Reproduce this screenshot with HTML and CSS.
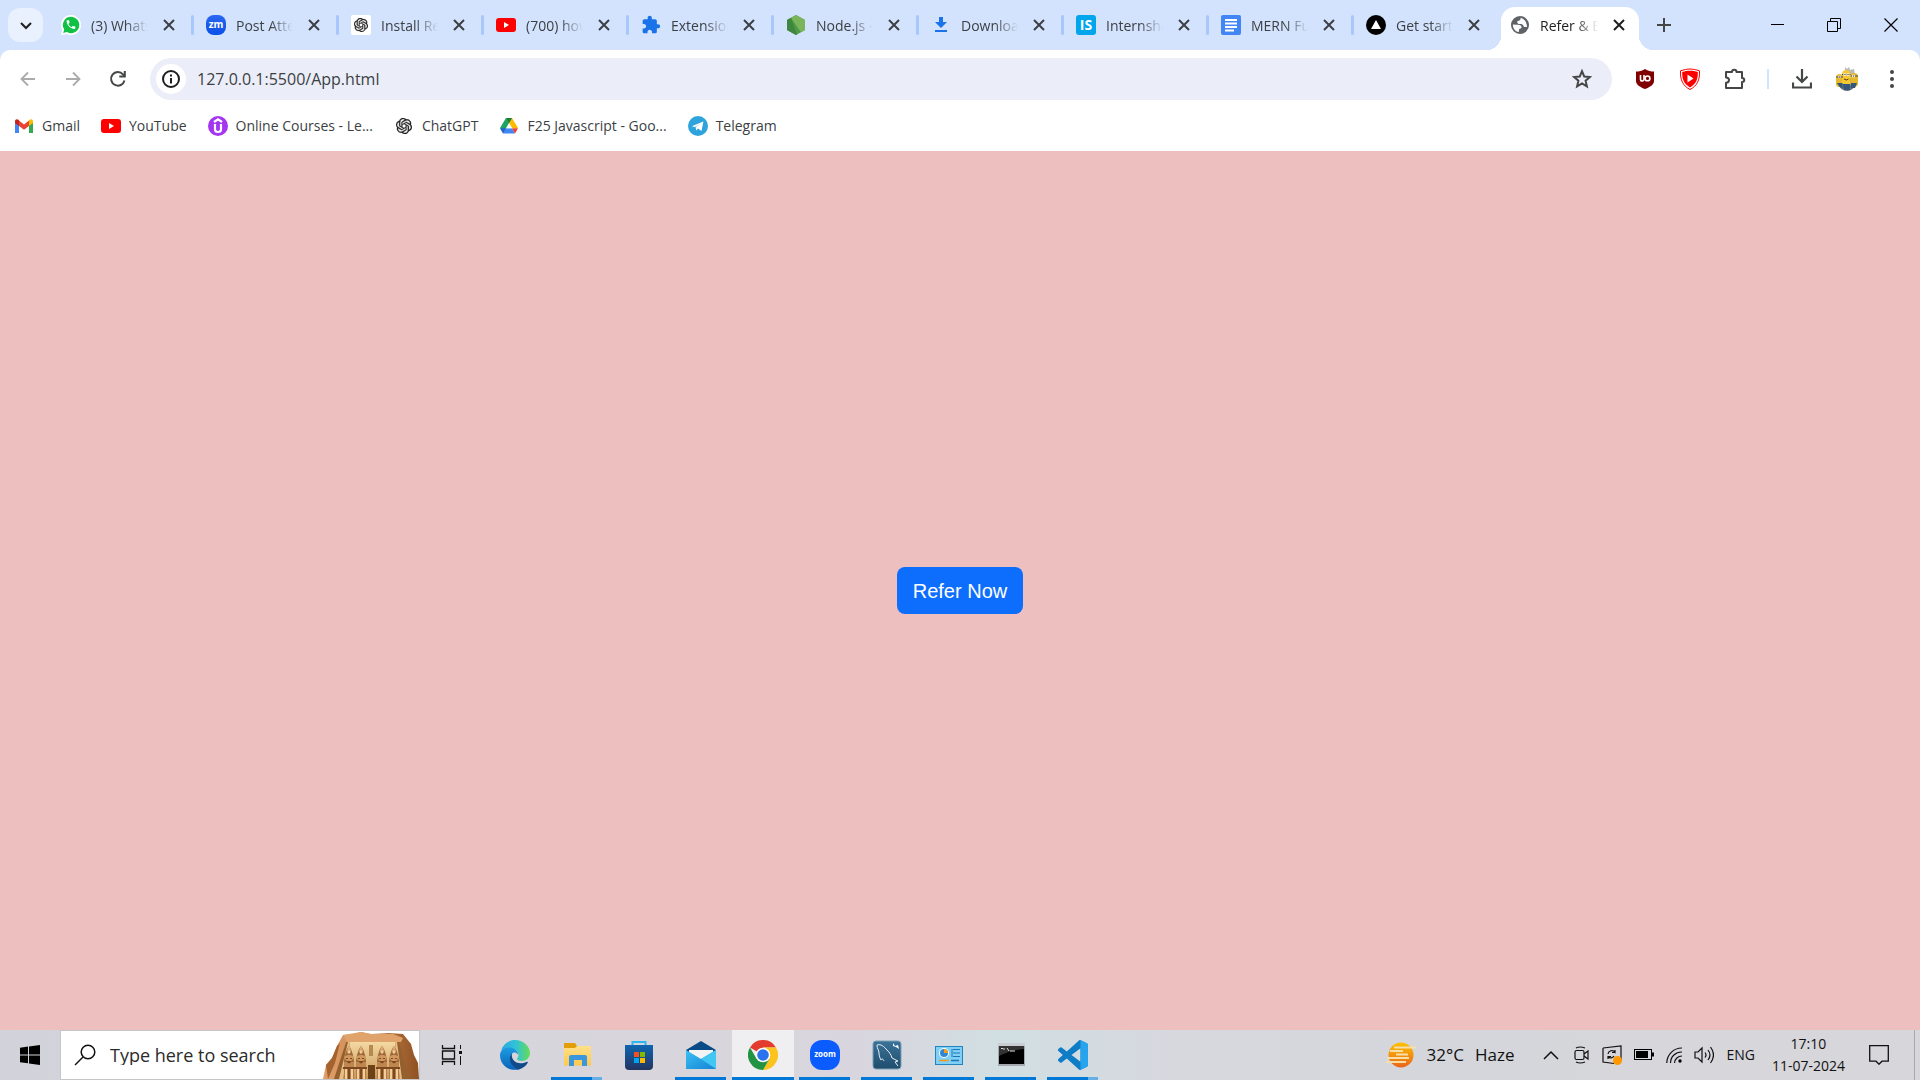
FILE: index.html
```html
<!DOCTYPE html>
<html lang="en">
<head>
<meta charset="utf-8">
<title>Refer &amp; Earn</title>
<link rel="stylesheet" href="styles.css">
</head>
<body>
<svg class="defs" aria-hidden="true">
  <defs>
    <symbol id="i-x" viewBox="0 0 14 14"><path d="M2 2l10 10M12 2L2 12" stroke="currentColor" stroke-width="2" fill="none"/></symbol>
    <symbol id="i-youtube" viewBox="0 0 20 20"><rect y="3" width="20" height="14" rx="3" fill="#f00"/><path d="M8 7l5 3-5 3z" fill="#fff"/></symbol>
    <symbol id="i-gpt" viewBox="0 0 24 24"><path fill="#222" stroke="#222" stroke-width=".5" d="M22.2819 9.8211a5.9847 5.9847 0 0 0-.5157-4.9108 6.0462 6.0462 0 0 0-6.5098-2.9A6.0651 6.0651 0 0 0 4.9807 4.1818a5.9847 5.9847 0 0 0-3.9977 2.9 6.0462 6.0462 0 0 0 .7427 7.0966 5.98 5.98 0 0 0 .511 4.9107 6.051 6.051 0 0 0 6.5146 2.9001A5.9847 5.9847 0 0 0 13.2599 24a6.0557 6.0557 0 0 0 5.7718-4.2058 5.9894 5.9894 0 0 0 3.9977-2.9001 6.0557 6.0557 0 0 0-.7475-7.0729zm-9.022 12.6081a4.4755 4.4755 0 0 1-2.8764-1.0408l.1419-.0804 4.7783-2.7582a.7948.7948 0 0 0 .3927-.6813v-6.7369l2.02 1.1686a.071.071 0 0 1 .038.052v5.5826a4.504 4.504 0 0 1-4.4945 4.4944zm-9.6607-4.1254a4.4708 4.4708 0 0 1-.5346-3.0137l.142.0852 4.783 2.7582a.7712.7712 0 0 0 .7806 0l5.8428-3.3685v2.3324a.0804.0804 0 0 1-.0332.0615L9.74 19.9502a4.4992 4.4992 0 0 1-6.1408-1.6464zM2.3408 7.8956a4.485 4.485 0 0 1 2.3655-1.9728V11.6a.7664.7664 0 0 0 .3879.6765l5.8144 3.3543-2.0201 1.1685a.0757.0757 0 0 1-.071 0l-4.8303-2.7865A4.504 4.504 0 0 1 2.3408 7.872zm16.5963 3.8558L13.1038 8.364 15.1192 7.2a.0757.0757 0 0 1 .071 0l4.8303 2.7913a4.4944 4.4944 0 0 1-.6765 8.1042v-5.6772a.79.79 0 0 0-.407-.667zm2.0107-3.0231l-.142-.0852-4.7735-2.7818a.7759.7759 0 0 0-.7854 0L9.409 9.2297V6.8974a.0662.0662 0 0 1 .0284-.0615l4.8303-2.7866a4.4992 4.4992 0 0 1 6.6802 4.66zM8.3065 12.863l-2.02-1.1638a.0804.0804 0 0 1-.038-.0567V6.0742a4.4992 4.4992 0 0 1 7.3757-3.4537l-.142.0805L8.704 5.459a.7948.7948 0 0 0-.3927.6813zm1.0976-2.3654l2.602-1.4998 2.6069 1.4998v2.9994l-2.5974 1.4997-2.6067-1.4997Z"/></symbol>
    <symbol id="pharaoh" viewBox="0 0 12 34"><path d="M6 0l2 3 2 6 1 6v6H1v-6l1-6 2-6z" fill="#a06a38"/><path d="M5 1h2l1 4-2 3-2-3z" fill="#d9a972"/><circle cx="6" cy="6" r="1.500" fill="#efcf9c"/><path d="M2 10l3-1h2l3 1v3L8 15H4l-2-2z" fill="#d0985f"/><path d="M3 12h2v1H3zM7 12h2v1H7zM4 15h4v2H4z" fill="#7d4a20"/><path d="M1 16h3l2 2 2-2h3v5H1z" fill="#c08650"/><path d="M0 21h12v2H0z" fill="#7b491f"/><path d="M1 23h4v11H1zM7 23h4v11H7z" fill="#b67c47"/><path d="M2 23h2v11H2zM8 23h2v11H8z" fill="#f0cf9d"/><path d="M5 23h2v11H5z" fill="#7b491f"/></symbol>
    <linearGradient id="g-zm" x1="0" y1="0" x2="0" y2="1"><stop offset="0" stop-color="#2a66f0"/><stop offset="1" stop-color="#0a4fe8"/></linearGradient>
    <linearGradient id="g-edge" x1="0" y1="0" x2="1" y2="0"><stop offset="0" stop-color="#2aa8e0"/><stop offset=".5" stop-color="#2fc2d8"/><stop offset="1" stop-color="#66dd55"/></linearGradient>
    <linearGradient id="g-edge2" x1="0" y1="0" x2="0" y2="1"><stop offset="0" stop-color="#1b9de2"/><stop offset="1" stop-color="#0b63b8"/></linearGradient>
    <linearGradient id="g-store" x1="0" y1="0" x2="0" y2="1"><stop offset="0" stop-color="#0f66b0"/><stop offset="1" stop-color="#22345f"/></linearGradient>
    <linearGradient id="g-folder" x1="0" y1="0" x2="0" y2="1"><stop offset="0" stop-color="#ffe08a"/><stop offset="1" stop-color="#fdc94b"/></linearGradient>
    <linearGradient id="g-mail" x1="0" y1="0" x2="1" y2="1"><stop offset="0" stop-color="#3cc0f2"/><stop offset="1" stop-color="#1583d6"/></linearGradient>
    <linearGradient id="g-sql" x1="0" y1="0" x2="0" y2="1"><stop offset="0" stop-color="#3b7399"/><stop offset="1" stop-color="#1f4d6d"/></linearGradient>
    <linearGradient id="g-sun" x1="0" y1="0" x2="0" y2="1"><stop offset="0" stop-color="#fcc200"/><stop offset="1" stop-color="#e9631b"/></linearGradient>
    <linearGradient id="g-rock" x1="0" y1="0" x2="1" y2="0"><stop offset="0" stop-color="#e0a069"/><stop offset=".5" stop-color="#c9824d"/><stop offset="1" stop-color="#8f5222"/></linearGradient>
    <linearGradient id="g-wall" x1="0" y1="0" x2="0" y2="1"><stop offset="0" stop-color="#f4d9a2"/><stop offset="1" stop-color="#c9965a"/></linearGradient>
  </defs>
</svg>

<header class="browser">
  <div class="tabstrip">
    <button class="tab-search" aria-label="Search tabs"><svg width="14" height="14" viewBox="0 0 14 14"><path d="M2 5l5 5 5-5" fill="none" stroke="#1f1f1f" stroke-width="2"/></svg></button>
    <nav class="tabs" aria-label="Tabs">
      <div class="tab">
        <svg class="fav" viewBox="0 0 20 20"><path d="M10 0a10 10 0 1 1-4.500 18.900L0 20l1.300-5A10 10 0 0 1 10 0z" fill="#fff"/><path d="M10 1.800A8.200 8.200 0 1 1 5.800 17l-3.600.9 1-3.400A8.200 8.200 0 0 1 10 1.800z" fill="#0fc144"/><path transform="translate(4.200 3.800) scale(.48)" fill="#fff" d="M6.620 10.790c1.440 2.830 3.760 5.140 6.590 6.590l2.200-2.200c.27-.27.67-.36 1.020-.24 1.120.37 2.330.57 3.570.57.55 0 1 .45 1 1V20c0 .55-.45 1-1 1-9.390 0-17-7.610-17-17 0-.55.45-1 1-1h3.500c.55 0 1 .45 1 1 0 1.250.2 2.450.57 3.570.11.35.03.74-.25 1.020z"/></svg>
        <button class="tab-title">(3) WhatsApp</button><button class="tab-close" aria-label="Close tab"><svg><use href="#i-x"/></svg></button>
      </div>
      <div class="tab">
        <svg class="fav" viewBox="0 0 20 20"><rect width="20" height="20" rx="8" fill="url(#g-zm)"/><text x="10" y="13" text-anchor="middle" class="logo logo-zm">zm</text></svg>
        <button class="tab-title">Post Attendee</button><button class="tab-close" aria-label="Close tab"><svg><use href="#i-x"/></svg></button>
      </div>
      <div class="tab">
        <svg class="fav" viewBox="0 0 20 20"><rect width="20" height="20" rx="2" fill="#fff"/><use href="#i-gpt" x="3" y="3" width="14" height="14"/></svg>
        <button class="tab-title">Install React</button><button class="tab-close" aria-label="Close tab"><svg><use href="#i-x"/></svg></button>
      </div>
      <div class="tab">
        <svg class="fav"><use href="#i-youtube"/></svg>
        <button class="tab-title">(700) how to</button><button class="tab-close" aria-label="Close tab"><svg><use href="#i-x"/></svg></button>
      </div>
      <div class="tab">
        <svg class="fav" viewBox="0 0 24 24"><path fill="#1a73e8" d="M20.500 11H19V7c0-1.100-.9-2-2-2h-4V3.500C13 2.120 11.880 1 10.500 1S8 2.120 8 3.500V5H4c-1.100 0-1.990.9-1.990 2v3.800H3.500c1.490 0 2.700 1.210 2.700 2.700s-1.210 2.700-2.700 2.700H2V20c0 1.100.9 2 2 2h3.800v-1.500c0-1.490 1.210-2.700 2.700-2.700 1.490 0 2.700 1.210 2.700 2.700V22H17c1.100 0 2-.9 2-2v-4h1.500c1.380 0 2.500-1.120 2.500-2.500S21.880 11 20.500 11z"/></svg>
        <button class="tab-title">Extensions</button><button class="tab-close" aria-label="Close tab"><svg><use href="#i-x"/></svg></button>
      </div>
      <div class="tab">
        <svg class="fav" viewBox="0 0 20 20"><path d="M10 0l9 5v10l-9 5-9-5V5z" fill="#4f9a44"/><path d="M10 0l9 5v10l-4 2.200L5 3z" fill="#7ab55c"/><path d="M1 5l4-2.200L11 19.500l-1 .5-9-5z" fill="#3f873f"/></svg>
        <button class="tab-title">Node.js - Run</button><button class="tab-close" aria-label="Close tab"><svg><use href="#i-x"/></svg></button>
      </div>
      <div class="tab">
        <svg class="fav" viewBox="0 0 20 20"><path d="M8 2h4v5h4l-6 6-6-6h4zM4 15h12v2H4z" fill="#1a73e8"/></svg>
        <button class="tab-title">Downloads</button><button class="tab-close" aria-label="Close tab"><svg><use href="#i-x"/></svg></button>
      </div>
      <div class="tab">
        <svg class="fav" viewBox="0 0 20 20"><rect width="20" height="20" rx="3" fill="#00a5ec"/><text x="10" y="15" text-anchor="middle" class="logo logo-is">IS</text></svg>
        <button class="tab-title">Internshala</button><button class="tab-close" aria-label="Close tab"><svg><use href="#i-x"/></svg></button>
      </div>
      <div class="tab">
        <svg class="fav" viewBox="0 0 20 20"><rect width="20" height="20" rx="2" fill="#4285f4"/><path d="M4 5h12M4 8.500h12M4 12h12M4 15.500h9" stroke="#fff" stroke-width="1.800"/></svg>
        <button class="tab-title">MERN Full Stack</button><button class="tab-close" aria-label="Close tab"><svg><use href="#i-x"/></svg></button>
      </div>
      <div class="tab">
        <svg class="fav" viewBox="0 0 20 20"><circle cx="10" cy="10" r="10" fill="#000"/><path d="M10 5l5 9H5z" fill="#fff"/></svg>
        <button class="tab-title">Get started</button><button class="tab-close" aria-label="Close tab"><svg><use href="#i-x"/></svg></button>
      </div>
      <div class="tab active">
        <svg class="fav" viewBox="0 0 20 20"><circle cx="10" cy="10" r="9" fill="#5f6368"/><path d="M10.500 2.800c.3 1.700-.3 2.700-2 2.900-1.200.2-1.500.8-1.200 1.700.4 1.300 1.400 1.700 3 1.600 1.700 0 2.600.5 3.200 1.900.6 1.300 1.700 1.500 3.600.9C16.500 7 14.500 3.700 10.500 2.800zM2.900 9.500c-.2 3.500 2.100 6.900 6 7.600v-1.900c.1-1 .6-1.300 1.700-1.600 1.300-.4 1.300-2 .3-2.900-.8-.8-2-1-4-1z" fill="#fff"/></svg>
        <button class="tab-title">Refer &amp; Earn</button><button class="tab-close" aria-label="Close tab"><svg><use href="#i-x"/></svg></button>
      </div>
    </nav>
    <button class="new-tab" aria-label="New tab"><svg width="14" height="14" viewBox="0 0 14 14"><path d="M7 0v14M0 7h14" stroke="#444746" stroke-width="2"/></svg></button>
    <div class="window-controls">
      <button aria-label="Minimize"><svg width="14" height="14" viewBox="0 0 14 14"><path d="M1 6.500h13" stroke="#000"/></svg></button>
      <button aria-label="Restore"><svg width="14" height="14" viewBox="0 0 14 14"><path d="M.5 3.500h10v10H.5zM3.500 3V.5h10v10H11" fill="none" stroke="#000"/></svg></button>
      <button aria-label="Close"><svg width="14" height="14" viewBox="0 0 14 14"><path d="M.5.5l13 13M13.500.5l-13 13" stroke="#000" stroke-width="1.200"/></svg></button>
    </div>
  </div>

  <div class="chrome-panel">
    <div class="toolbar">
      <div class="nav-buttons">
        <button aria-label="Back"><svg width="16" height="16" viewBox="0 0 16 16"><path d="M15 8H2M8 1.500L1.500 8 8 14.500" fill="none" stroke="#a9abad" stroke-width="1.800"/></svg></button>
        <button aria-label="Forward"><svg width="16" height="16" viewBox="0 0 16 16"><path d="M1 8h13M8 1.500L14.500 8 8 14.500" fill="none" stroke="#a9abad" stroke-width="1.800"/></svg></button>
        <button aria-label="Reload"><svg width="18" height="18" viewBox="0 0 18 18"><path d="M15.500 10.500A6.800 6.800 0 1 1 14 4.300l1.500 1.700" fill="none" stroke="#444746" stroke-width="2"/><path d="M16.800 1v6.500h-6.500V5.600h4.500V1z" fill="#444746"/></svg></button>
      </div>
      <form class="omnibox">
        <button type="button" class="site-info" aria-label="Site information"><svg width="18" height="18" viewBox="0 0 18 18"><circle cx="9" cy="9" r="8" fill="none" stroke="#1f1f1f" stroke-width="2"/><path d="M9 8v5.500M9 4.500v2" stroke="#1f1f1f" stroke-width="2"/></svg></button>
        <input type="text" aria-label="Address" value="127.0.0.1:5500/App.html">
        <button type="button" class="star" aria-label="Bookmark"><svg width="20" height="20" viewBox="0 0 20 20"><path d="M10 2.200l2.200 5.300 5.700.5-4.300 3.700 1.300 5.600-4.900-3-4.900 3 1.300-5.600L2.100 8l5.700-.5z" fill="none" stroke="#444746" stroke-width="2"/></svg></button>
      </form>
      <div class="extensions">
        <button aria-label="uBlock"><svg width="20" height="20" viewBox="0 0 20 20"><path d="M10 0c3 2 6 2.500 9 2.500V12c0 4-5 6.500-9 8-4-1.500-9-4-9-8V2.500C4 2.500 7 2 10 0z" fill="#800000"/><path d="M5.500 6v4.200a1.600 1.600 0 0 0 3.500 0V6" fill="none" stroke="#fff" stroke-width="1.600"/><circle cx="12.500" cy="9.400" r="2.400" fill="none" stroke="#fff" stroke-width="1.600"/></svg></button>
        <button aria-label="Video blocker"><svg width="22" height="22" viewBox="0 0 22 22"><path d="M11 1c3 0 6 .8 9.500 1.800C21 12 18 18 11 21.500 4 18 1 12 1.500 2.800 5 1.800 8 1 11 1z" fill="#fff" stroke="#f00"/><path d="M11 2.700c3 0 5 .5 7.800 1.400C19 11.500 17 16 11 19.500 5 16 3 11.500 3.200 4.100 6 3.200 8 2.700 11 2.700z" fill="#f00"/><path d="M8.500 6.500l6 4-6 4z" fill="#fff"/></svg></button>
        <button aria-label="Extensions"><svg width="22" height="22" viewBox="0 0 22 22"><path d="M3 4h5c0-3 4.500-3 4.500 0H18v6c3 0 3 4 0 4v6H2v-5.200c4 0 4-5.400 0-5.400V4z" fill="none" stroke="#444746" stroke-width="2" stroke-linejoin="round"/></svg></button>
        <span class="divider"></span>
        <button aria-label="Downloads"><svg width="20" height="20" viewBox="0 0 20 20"><path d="M10 0v13M4.500 7.500L10 13l5.500-5.500M1 13.500V18.500h18v-5" fill="none" stroke="#444746" stroke-width="2.200"/></svg></button>
        <button aria-label="Profile"><svg width="24" height="26" viewBox="0 0 24 26"><path d="M2 12a10 13 0 1 0 20 0z" fill="#6d7076"/><path d="M10 1l2 2 2-2 1 3 4-1 1 6H10z" fill="#b8bab5"/><rect x="1" y="8" width="7" height="13" rx="3.500" fill="#e6b92c"/><rect x="15.500" y="7" width="7.500" height="14" rx="3.700" fill="#e6b92c"/><rect x="7" y="4" width="8.500" height="18" rx="4.200" fill="#f4c832"/><path d="M2 17h5.500v5l-3-1zM7.500 18h7.500v6h-6zM16 17h6l-2 5h-4z" fill="#31577c"/><path d="M1 11h7M7 8.500h8.500M15.500 10H23" stroke="#484841"/><circle cx="4.500" cy="11" r="1.400" fill="#ddd"/><circle cx="9.800" cy="8.500" r="1.500" fill="#eee"/><circle cx="13" cy="8.500" r="1.500" fill="#eee"/><circle cx="18.500" cy="10" r="1.600" fill="#eee"/><path d="M4.500 10.500v1M10 8v1M13 8v1M18.500 9.500v1M9 13q2.500 2 4.500 0" stroke="#5a3510" fill="none"/></svg></button>
        <button aria-label="Menu"><svg width="20" height="20" viewBox="0 0 20 20" fill="#444746"><circle cx="10" cy="3" r="2"/><circle cx="10" cy="10" r="2"/><circle cx="10" cy="17" r="2"/></svg></button>
      </div>
    </div>

    <nav class="bookmarks" aria-label="Bookmarks">
      <a href="#"><svg class="fav" viewBox="0 0 20 20"><path d="M1 17V5l4 3v9z" fill="#4285f4"/><path d="M15 8l4-3v12h-4z" fill="#34a853"/><path d="M5 4.500l5 4 5-4V10l-5 3.800L5 10z" fill="#ea4335"/><path d="M1 5.500C1 3 3.500 2.600 5 4.300V10L1 7z" fill="#c5221f"/><path d="M19 5.500c0-2.500-2.500-2.900-4-1.200V10l4-3z" fill="#fbbc04"/></svg>Gmail</a>
      <a href="#"><svg class="fav"><use href="#i-youtube"/></svg>YouTube</a>
      <a href="#"><svg class="fav" viewBox="0 0 20 20"><circle cx="10" cy="10" r="10" fill="#a435f0"/><path d="M6 6l4-2.600L14 6M7 8v5.500c0 3.300 6 3.300 6 0V8" fill="none" stroke="#fff" stroke-width="2.200"/></svg>Online Courses - Le...</a>
      <a href="#"><svg class="fav" viewBox="-3 -3 30 30"><use href="#i-gpt" width="24" height="24"/></svg>ChatGPT</a>
      <a href="#"><svg class="fav" viewBox="0 0 20 20"><path d="M7 2h6l-3 5.500L4.500 17 1 12z" fill="#1ea362"/><path d="M13 2l6 10h-6L7 2z" fill="#ffba00"/><path d="M7 2h6l-3 5.200z" fill="#108242"/><path d="M7 12.200h6l3 5.300H4z" fill="#4285f4"/><path d="M4 17.500L1 12.200h6z" fill="#2463d1"/><path d="M13 12.200h6l-3 5.300z" fill="#ea4335"/><path d="M10 7.200l3 5H7z" fill="#fff"/></svg>F25 Javascript - Goo...</a>
      <a href="#"><svg class="fav" viewBox="0 0 20 20"><circle cx="10" cy="10" r="10" fill="#2fa4dc"/><path d="M3.800 10.200L15.400 5.500 13.500 15l-3.500-2.400-1.800 1.800-.6-3.500 5.200-3.500-6 3.700z" fill="#fff"/></svg>Telegram</a>
    </nav>
  </div>
</header>

<main class="page">
  <button class="refer">Refer Now</button>
</main>

<footer class="taskbar">
  <button class="start" aria-label="Start"><svg width="20" height="20" viewBox="0 0 20 20"><path d="M0 2.700L8 1.600v7.800H0zM9 1.400L20 0v9.400H9zM0 10.400h8v7.900L0 17.200zM9 10.400h11V20L9 18.500z" fill="#000"/></svg></button>
  <label class="search">
    <svg width="22" height="22" viewBox="0 0 22 22"><circle cx="14" cy="8" r="6.800" fill="none" stroke="#111" stroke-width="1.500"/><path d="M9 13l-8 8" stroke="#111" stroke-width="1.500"/></svg>
    <input type="text" placeholder="Type here to search" aria-label="Search">
    <svg class="temple" width="96" height="47" viewBox="0 0 96 47"><path d="M0 47l3-14 6-7 5-12 6-11 10-1 8-2 10 2 18-1 14 1 8 10 3 11 4 8 1 16z" fill="url(#g-rock)"/><path d="M20 3l18-3 10 2 22 0 10 4-2 4H24z" fill="#e0a36c"/><path d="M3 33l6-7 5-12 3-3-5 20-7 16z" fill="#a4622f"/><path d="M23 10h52l10 37H12z" fill="url(#g-wall)"/><path d="M23 10l-12 37h9L27 10zM72 10l5 37h9L76 10z" fill="#946030"/><path d="M25 10l-9 37h4L27 10zM72 10l5 37h2L74 10z" fill="#e7bd84"/><path d="M46 13h4v11h-4z" fill="#b48a50"/><path d="M45 33h7v14h-7z" fill="#6e4217"/><use href="#pharaoh" x="20" y="14" width="12" height="34"/><use href="#pharaoh" x="32" y="14" width="12" height="34"/><use href="#pharaoh" x="53" y="14" width="12" height="34"/><use href="#pharaoh" x="65" y="14" width="12" height="34"/></svg>
  </label>
  <nav class="apps" aria-label="Taskbar">
    <button class="task-view" aria-label="Task view"><svg width="22" height="20" viewBox="0 0 22 20"><path d="M1.500 0v3.500h12V0M1.500 20v-3.500h12V20M1.500 6h12v8h-12z" fill="none" stroke="#111" stroke-width="1.300"/><path d="M19.500 0v4M19.500 11v9" stroke="#111"/><path d="M18 6h3v3h-3z" fill="#111"/></svg></button>
    <button aria-label="Edge"><svg width="30" height="30" viewBox="0 0 30 30"><path d="M1 11C3 4 9 0 15 0c9 0 15 7 15 13 0 5-4 8-8 8-3 0-5-1-5-2 0-1 1.500-1.500 1.500-4C18.500 11 14 8 10 8 5 8 2 10 1 11z" fill="url(#g-edge)"/><path d="M0 15C0 10 5 7 10 7.500c4.500.5 8 3.500 8.300 7-5-5.500-10 1-7 7 2 5 6 7.500 9 7.500C9 32.500 0 25 0 15z" fill="url(#g-edge2)"/><path d="M12 13c-4 4-3 12 6 16.500 4-.8 7.500-3 9.600-6.500.6-1-.2-1.400-1-1C17 26 10.500 20 12 13z" fill="#114a8b"/></svg></button>
    <button class="running multi" aria-label="File Explorer"><svg width="30" height="30" viewBox="0 0 30 30"><path d="M2 3h11l2 3v4H2z" fill="#e39d08"/><path d="M2 8h11l2-2h14v19.500H2z" fill="url(#g-folder)"/><path d="M7 26V17q0-2 2-2h14q2 0 2 2v9h-5v-6h-8v6z" fill="#3a96dd"/></svg></button>
    <button aria-label="Store"><svg width="30" height="30" viewBox="0 0 30 30"><path d="M8.500 7V2h13v5" fill="none" stroke="#2cb7f0" stroke-width="2"/><path d="M1 5h28v21q0 4-4 4H5q-4 0-4-4z" fill="url(#g-store)"/><path d="M10 12h5v5h-5z" fill="#f25022"/><path d="M16 12h5v5h-5z" fill="#7fba00"/><path d="M10 18h5v5h-5z" fill="#00a4ef"/><path d="M16 18h5v5h-5z" fill="#ffb900"/></svg></button>
    <button class="running" aria-label="Mail"><svg width="30" height="30" viewBox="0 0 30 30"><path d="M0 10l15-9 15 9v6H0z" fill="#0a4a86"/><path d="M3 10h24v10H3z" fill="#f3f3f3"/><path d="M0 10l15 9 15-9v19H0z" fill="url(#g-mail)"/><path d="M15 19l15 10V10z" fill="#42c6f4"/></svg></button>
    <button class="running current" aria-label="Chrome"><svg width="30" height="30" viewBox="0 0 30 30"><path d="M15 15L2 7.500A15 15 0 0 1 28 7.500H15z" fill="#e33b2e"/><path d="M15 15l6.500 3.800L15 30A15 15 0 0 0 28 7.500H15z" fill="#fcc31e"/><path d="M15 15L8.500 18.700 2 7.500A15 15 0 0 0 15 30l6.500-11.200z" fill="#229342"/><circle cx="15" cy="15" r="7.300" fill="#fff"/><circle cx="15" cy="15" r="5.800" fill="#2b72ee"/></svg></button>
    <button class="running" aria-label="Zoom"><svg width="30" height="30" viewBox="0 0 30 30"><rect width="30" height="30" rx="12" fill="#0b5cff"/><text x="15" y="17" text-anchor="middle" class="logo logo-zoom">zoom</text></svg></button>
    <button class="running" aria-label="MySQL Workbench"><svg width="30" height="30" viewBox="0 0 30 30"><rect x="1" y="1" width="28" height="28" rx="3" fill="url(#g-sql)" stroke="#7fa0b5"/><path d="M5 5c2-1 6 0 9 4 3 3 5 5 6 9l6 3-3 1 3 4M5 5c0 4 2 5 2 8s1 5 2 7c1-2 2-1 3 1" fill="none" stroke="#e9f0f4"/><path d="M21 3l2 3 3-1 1 4-3-2-3-1z" fill="#fff"/></svg></button>
    <button class="running" aria-label="Control Panel"><svg width="30" height="30" viewBox="0 0 30 30"><rect x="1.500" y="6.500" width="27" height="18" fill="#7fd0f7" stroke="#2384bd"/><circle cx="10" cy="13" r="5" fill="#fff"/><circle cx="10" cy="13" r="4" fill="#2f86d3"/><path d="M10 9v4h4a4 4 0 0 0-4-4z" fill="#f59d1d"/><path d="M19 9.500h7M19 13h7M19 16.500h7M18 9v8" stroke="#1f74b4"/><path d="M5 20.500h10" stroke="#f39a18" stroke-width="1.500"/><path d="M17 20.500h8" stroke="#1f74b4" stroke-width="1.500"/></svg></button>
    <button class="running" aria-label="Command Prompt"><svg width="30" height="30" viewBox="0 0 30 30"><rect x="2" y="3" width="27" height="23" fill="#a5a9ae"/><path d="M2 3h27v3H2z" fill="#c9ccd0"/><rect x="3" y="6" width="25" height="18" fill="#000"/><path d="M3 6h25v3Q14 10 3 16z" fill="#333"/><path d="M5 8.500h2M8 8v2M11 8l2 3M14 11h5" stroke="#ddd" fill="none"/></svg></button>
    <button class="running multi" aria-label="VS Code"><svg width="30" height="30" viewBox="0 0 24 24"><path fill="#0f7cc6" d="M23.150 2.587L18.210.21a1.494 1.494 0 0 0-1.705.29l-9.460 8.630-4.120-3.128a.999.999 0 0 0-1.276.057L.327 7.261A1 1 0 0 0 .326 8.740L3.899 12 .326 15.260a1 1 0 0 0 .001 1.479L1.650 17.940a.999.999 0 0 0 1.276.057l4.120-3.128 9.460 8.630a1.492 1.492 0 0 0 1.704.29l4.942-2.377A1.500 1.500 0 0 0 24 20.060V3.939a1.500 1.500 0 0 0-.85-1.352zm-5.146 14.861L10.826 12l7.178-5.448v10.896z"/><path fill="#28a4ee" d="M18 .15l5.150 2.437A1.500 1.500 0 0 1 24 3.939V20.060a1.500 1.500 0 0 1-.85 1.350L18 23.850z"/></svg></button>
  </nav>
  <div class="tray">
    <button class="weather">
      <svg width="30" height="26" viewBox="0 0 30 26"><circle cx="15" cy="13" r="12.500" fill="url(#g-sun)"/><path d="M8 5.500h22M4 9h13M10 12.500h12M1 16h22M0 20h20" stroke="#f7dfa8" stroke-width="1.800"/></svg>
      <span>32°C</span><span>Haze</span>
    </button>
    <button class="t-chevron" aria-label="Show hidden icons"><svg width="16" height="10" viewBox="0 0 16 10"><path d="M1 9l7-7 7 7" fill="none" stroke="#111" stroke-width="1.500"/></svg></button>
    <button aria-label="Meet now"><svg width="16" height="18" viewBox="0 0 16 18"><rect x="1" y="4.500" width="9" height="9" rx="1.500" fill="none" stroke="#111" stroke-width="1.200"/><path d="M10 8l4-3v8l-4-3M2 2q4-2 9 0M2 16q4 2 9 0" fill="none" stroke="#111" stroke-width="1.200"/></svg></button>
    <button aria-label="Windows Update"><svg width="20" height="20" viewBox="0 0 20 20"><path d="M1 3l18-2v14M1 3v14l11 1.500" fill="none" stroke="#111" stroke-width="1.200"/><path d="M6 9a4 4 0 0 1 7-2V5M13 7.500h-3M12 11a4 4 0 0 1-6 1v2M6 11.500h3" fill="none" stroke="#111" stroke-width="1.200"/><circle cx="15.500" cy="15.500" r="4.500" fill="#ff9800"/></svg></button>
    <button aria-label="Battery"><svg width="20" height="12" viewBox="0 0 20 12"><rect x=".5" y=".5" width="17" height="10" fill="none" stroke="#000"/><path d="M2 2h12v7H2zM18 3.500h2v4h-2z" fill="#000"/></svg></button>
    <button aria-label="Network"><svg width="16" height="16" viewBox="0 0 16 16"><path d="M.8 16A15 15 0 0 1 16 1M4.500 16A11 11 0 0 1 16 5M8.500 16A7.500 7.500 0 0 1 16 9" fill="none" stroke="#111" stroke-width="1.200"/><circle cx="14" cy="14" r="1.700"/></svg></button>
    <button aria-label="Volume"><svg width="20" height="18" viewBox="0 0 20 18"><path d="M1 6h3l4-4v14l-4-4H1z" fill="none" stroke="#111" stroke-width="1.200"/><path d="M11 6.500q2 2.500 0 5M14 4q4 5 0 10M16.500 1q6 8 0 16" fill="none" stroke="#111" stroke-width="1.200"/></svg></button>
    <button class="lang">ENG</button>
    <button class="clock"><span>17:10</span><span>11-07-2024</span></button>
    <button class="notify" aria-label="Notifications"><svg width="20" height="20" viewBox="0 0 20 20"><path d="M.7.7h18.600v15.500h-6.300l-3 3-3-3H.7z" fill="none" stroke="#111" stroke-width="1.300"/></svg></button>
    <button class="peek" aria-label="Show desktop"></button>
  </div>
</footer>
</body>
</html>
```
FILE: styles.css
```css
* {
  box-sizing: border-box;
}

body {
  margin: 0;
  min-height: 100vh;
  display: flex;
  flex-direction: column;
  font-family: "Open Sans", "Noto Sans", sans-serif;
  font-size: 14px;
  line-height: 20px;
  color: #3c3f43;
}

button,
input {
  margin: 0;
  padding: 0;
  border: 0;
  background: none;
  font: inherit;
  color: inherit;
}

button {
  display: flex;
  align-items: center;
  justify-content: center;
}

svg {
  display: block;
  flex: none;
}

.defs {
  position: absolute;
  width: 0;
  height: 0;
}

.fav {
  width: 20px;
  height: 20px;
}

.logo {
  fill: #fff;
  font-weight: 700;
}

.logo-zm {
  font-size: 10px;
}

.logo-is {
  font-size: 14px;
}

.logo-zoom {
  font-size: 8px;
}

/* Tab strip */

.browser {
  background: #d3e3fd;
}

.tabstrip {
  display: flex;
  height: 50px;
  padding-left: 8px;
}

.tab-search {
  width: 35px;
  height: 34px;
  margin-top: 8px;
  border-radius: 12px;
  background: #e9f0fe;
}

.tabs {
  display: flex;
  flex: 0 1 1593px;
  min-width: 0;
  margin-left: 6px;
}

.tab {
  display: flex;
  align-items: center;
  flex: 0 1 145px;
  min-width: 0;
  padding: 0 18px 0 12px;
  position: relative;
}

.tab-title {
  flex: 1;
  min-width: 0;
  margin: 0 14px 0 10px;
  padding-top: 1px;
  justify-content: flex-start;
  overflow: hidden;
  white-space: nowrap;
  -webkit-mask-image: linear-gradient(90deg, #000 60%, transparent);
  mask-image: linear-gradient(90deg, #000 60%, transparent);
}

.tab-close svg {
  width: 14px;
  height: 14px;
}

.tab:not(.active)::after {
  content: "";
  width: 3px;
  height: 20px;
  border-radius: 2px;
  background: #a8c7fa;
  position: absolute;
  right: 0;
  top: 15px;
}

.tab:nth-last-child(2)::after {
  display: none;
}

.tab.active {
  margin-top: 7px;
  padding: 0 13px 7px 9px;
  flex-basis: 138px;
  margin-left: 2px;
  border-radius: 14px 14px 0 0;
  background: #fff;
  color: #1f1f1f;
}

.tab.active::before,
.tab.active::after {
  content: "";
  width: 14px;
  height: 14px;
  position: absolute;
  bottom: 0;
}

.tab.active::before {
  left: -14px;
  background: radial-gradient(circle at 0 0, transparent 14px, #fff 14px);
}

.tab.active::after {
  right: -14px;
  background: radial-gradient(circle at 100% 0, transparent 14px, #fff 14px);
}

.new-tab {
  width: 34px;
  margin-left: 5px;
}

.window-controls {
  display: flex;
  margin-left: auto;
  padding-right: 1px;
}

.window-controls button {
  width: 57px;
}

/* Toolbar */

.chrome-panel {
  background: #fff;
  border-radius: 10px 10px 0 0;
}

.toolbar {
  display: flex;
  align-items: center;
  padding: 8px 6px 0 5px;
}

.nav-buttons {
  display: flex;
}

.nav-buttons button {
  width: 45px;
  height: 42px;
}

.omnibox {
  display: flex;
  align-items: center;
  flex: 1;
  min-width: 0;
  height: 42px;
  margin-left: 10px;
  padding: 0 20px 0 6px;
  border-radius: 21px;
  background: #ebeef8;
}

.site-info {
  width: 30px;
  height: 30px;
  border-radius: 15px;
  background: #fff;
}

.omnibox input {
  flex: 1;
  min-width: 0;
  margin-left: 11px;
  font-size: 16px;
}

.extensions {
  display: flex;
  align-items: center;
  margin-left: 10px;
}

.extensions button {
  width: 45px;
  height: 42px;
}

.divider {
  width: 2px;
  height: 20px;
  margin: 0 10px;
  background: #d3e3fd;
}

.bookmarks {
  display: flex;
  align-items: center;
  gap: 21px;
  height: 51px;
  padding-left: 14px;
}

.bookmarks a {
  display: flex;
  align-items: center;
  gap: 8px;
  color: inherit;
  text-decoration: none;
  white-space: nowrap;
}

/* Page */

.page {
  flex: 1;
  display: flex;
  align-items: center;
  justify-content: center;
  background: #edbfbf;
}

.refer {
  height: 47px;
  padding: 1px 16px 0;
  border-radius: 8px;
  background: #0d6efd;
  color: #fff;
  font-family: "Liberation Sans", Arial, sans-serif;
  font-size: 20px;
}

/* Taskbar */

.taskbar {
  display: flex;
  height: 50px;
  color: #111;
  background: linear-gradient(90deg, #d2d3da, #d8d6dc 36%, #d8d5de 45%, #d1dfe2 52%, #d6d8de 61%, #d5d6db 75%, #d7d6db);
}

.start {
  width: 60px;
}

.search {
  display: flex;
  align-items: center;
  width: 360px;
  padding-left: 13px;
  border: 1px solid #c6c6c8;
  background: #fff;
}

.search input {
  flex: 1;
  min-width: 0;
  margin-left: 14px;
  font-size: 18px;
}

.search input::placeholder {
  color: #2b2b2b;
  opacity: 1;
}

.temple {
  align-self: flex-end;
}

.apps {
  display: flex;
}

.apps button {
  width: 62px;
  position: relative;
}

.apps .task-view {
  width: 64px;
}

.apps .current {
  background: #efeef1;
}

.running::after {
  content: "";
  height: 3px;
  background: #0078d7;
  position: absolute;
  left: 5px;
  right: 6px;
  bottom: 0;
}

.current::after {
  left: 0;
  right: 0;
}

.multi::after {
  background: linear-gradient(90deg, #0078d7 80%, #66aee6 80%);
}

.tray {
  display: flex;
  margin-left: auto;
}

.tray button {
  margin-left: 12px;
}

.tray .weather {
  margin-right: 17px;
  gap: 11px;
  font-size: 17px;
}

.tray .t-chevron {
  margin-right: 3px;
}

.tray .clock {
  flex-direction: column;
  line-height: 22px;
  margin-left: 17px;
}

.tray .notify {
  margin-left: 24px;
}

.tray .peek {
  width: 6px;
  margin-left: 25px;
  border-left: 1px solid #a9a9ae;
}
```
